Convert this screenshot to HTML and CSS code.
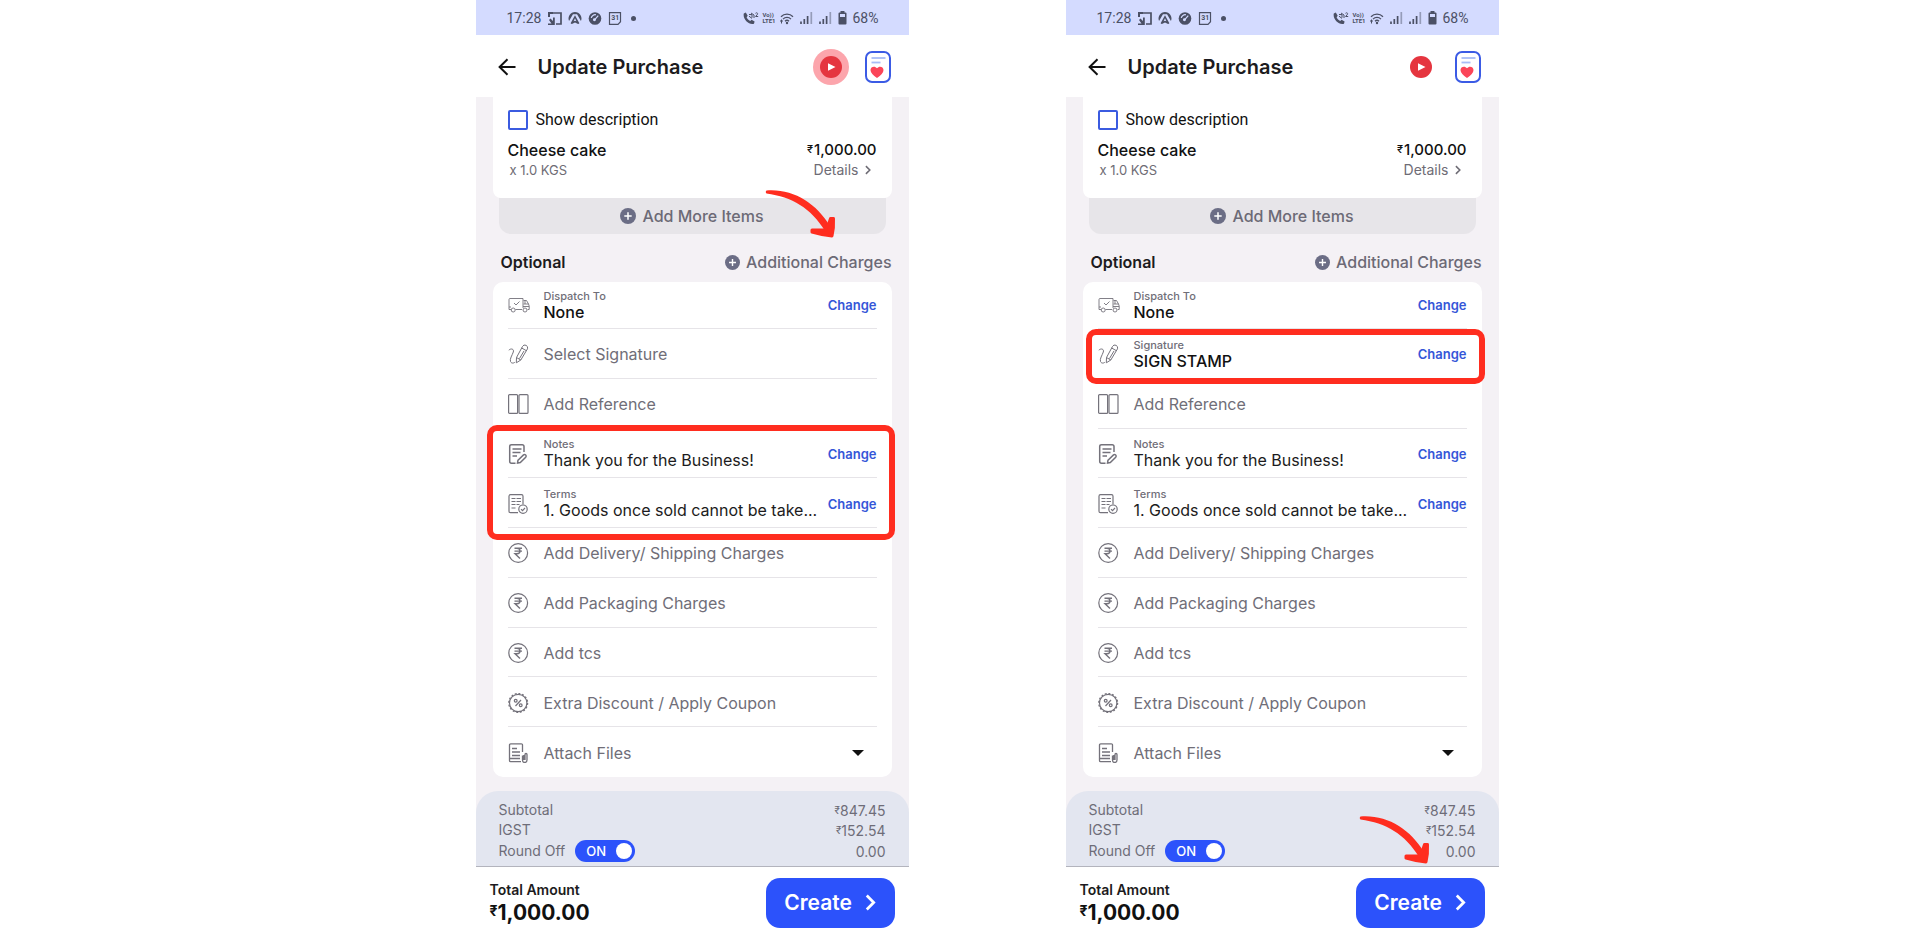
FILE: index.html
```html
<!DOCTYPE html>
<html lang="en">
<head>
<meta charset="utf-8">
<title>Update Purchase</title>
<link rel="stylesheet" href="styles.css">
</head>
<body>
<svg class="sprite" aria-hidden="true">
  <symbol id="i-cast" viewBox="0 0 14 13"><path d="M1 1h12v11H8" fill="none" stroke="currentColor" stroke-width="1.7"/><path d="M0 0h5v2H2v3H0V0zM0 13V11.500h3.500L1 8l1.500-1.500L5 9V5.500h1.800V13z" fill="currentColor"/></symbol>
  <symbol id="i-nav" viewBox="0 0 14 14"><path fill="currentColor" fill-rule="evenodd" d="M7 0a7 7 0 0 1 6.400 9.800L9.200 2.400H4.800L.6 9.800A7 7 0 0 1 7 0zM7 3.400l4.700 8.600a7 7 0 0 1-1.400 1L7 11.400 3.700 13a7 7 0 0 1-1.400-1zm0 3.400L5.500 10 7 9.400l1.500.6z"/></symbol>
  <symbol id="i-gauge" viewBox="0 0 14 14"><circle cx="7" cy="7" r="6.800" fill="currentColor"/><path d="M3 6.500A4.200 4.200 0 0 1 8 3M6 9l4.500-5" fill="none" stroke="#d4dbff" stroke-width="1.300"/><circle cx="6.400" cy="8.400" r="1.600" fill="#d4dbff"/></symbol>
  <symbol id="i-cal" viewBox="0 0 13 13"><path d="M1 .7h11v9L9.500 12.300H1z" fill="none" stroke="currentColor" stroke-width="1.200"/></symbol>
  <symbol id="i-call" viewBox="0 0 17 13"><path d="M.8 1.500 2.800.6 4.700 3.800 3.600 5.200c.8 1.800 2 3 3.600 3.700L8.600 7.800l3 1.700-.6 2.200C6 13.500-.5 7 .8 1.500z" fill="currentColor"/><path d="M6 2.500l3 .1v3M9 6.400 6 4.200M8 1l3 2v3" fill="none" stroke="currentColor"/><path d="M12.500 1.300c1-1 2.600-.3 2 .9L12.600 4.500h2.600" fill="none" stroke="currentColor"/></symbol>
  <symbol id="i-wifi" viewBox="0 0 14 12"><path d="M1 4.200a8.500 8.500 0 0 1 12 0M3 6.600a5.700 5.700 0 0 1 8 0M5 8.700a2.900 2.900 0 0 1 4 0" fill="none" stroke="currentColor" stroke-width="1.300"/><circle cx="7" cy="10.500" r="1.200" fill="currentColor"/><path d="M0 8.500h3M1.500 7v4" stroke="currentColor"/></symbol>
  <symbol id="i-signal" viewBox="0 0 13 12"><path d="M1 9.500V12M4.300 7V12M7.600 4V12" stroke="currentColor" stroke-width="1.700"/><path d="M11.300 0V12" stroke="currentColor" stroke-width="1.700" opacity=".45"/></symbol>
  <symbol id="i-batt" viewBox="0 0 9 14"><path fill="currentColor" fill-rule="evenodd" d="M2.500 0h4v1.500h1q1 0 1 1V12.500q0 1-1 1h-6q-1 0-1-1V2.500q0-1 1-1h1zM2 3v3h5V3z"/></symbol>
  <symbol id="i-back" viewBox="0 0 18 18"><path d="M17.500 9H2M9.500 1.200 1.600 9l7.900 7.800" fill="none" stroke="currentColor" stroke-width="2"/></symbol>
  <symbol id="i-play" viewBox="0 0 36 36"><circle cx="18" cy="18" r="11" fill="#e5353f"/><path d="M15 14.200v7.600l7.500-3.800z" fill="#fff"/></symbol>
  <symbol id="i-doc" viewBox="0 0 26 32"><rect x="1" y="1" width="24" height="30" rx="6" fill="#fff" stroke="#3b5be5" stroke-width="2"/><path d="M6.500 7h14" stroke="#a9bdf7" stroke-width="1.800"/><path d="M6.500 11.500h9" stroke="#a9bdf7" stroke-width="1.800"/><path d="M12 27C8 24 5.500 22 5.500 19c0-3.500 4.500-4.500 6.500-1.700 2-2.800 6.500-1.800 6.500 1.700 0 3-2.500 5-6.500 8z" fill="#fb4558"/></symbol>
  <symbol id="i-plus" viewBox="0 0 16 16"><circle cx="8" cy="8" r="8" fill="#6b6d85"/><path d="M8 4.300v7.400M4.300 8h7.400" stroke="#fff" stroke-width="1.500"/></symbol>
  <symbol id="i-chev" viewBox="0 0 10 16"><path d="M1.500 1.500 8 8l-6.500 6.500" fill="none" stroke="currentColor" stroke-width="2.600"/></symbol>
  <symbol id="i-truck" viewBox="0 0 22 20"><g fill="none" stroke="currentColor" stroke-width=".9"><path d="M3 14.500H1v-2.500h2M1 12V4.500q0-1 1-1h13V13M7.500 14.500H14M15.500 5.500h3l2 3.500.7 2v3.500h-1.500M15.500 9h5M17 5.500V9M15 11.500h6"/><path d="M6 8l2 2 3.500-3.500"/><circle cx="5.200" cy="15" r="2"/><circle cx="17" cy="15" r="2"/></g></symbol>
  <symbol id="i-sign" viewBox="0 0 22 20"><g fill="none" stroke="currentColor" stroke-width="1"><path d="M.8 6.200C3 4 6.300 5 5.300 8S1.500 15 2.500 17.500s4 1.500 4.500 .5"/><path d="M8.500 13.500 14.500 2.500q1.200-2.300 3.500-1.200t1.500 3.500L12.800 16 8.300 18.800zM13.700 4l4.300 2.500M8.500 13.500l4.300 2.500M16 7l-4.500 7.500"/></g></symbol>
  <symbol id="i-book" viewBox="0 0 22 20"><g fill="none" stroke="currentColor" stroke-width="1.200"><rect x=".6" y=".6" width="9" height="18.800" rx="1"/><rect x="11" y=".6" width="9" height="18.800" rx="1"/></g></symbol>
  <symbol id="i-note" viewBox="0 0 22 20"><g fill="none" stroke="currentColor" stroke-width="1.500"><path d="M16 8V2.500Q16 .8 14.200.8H3.500Q1.700.8 1.700 2.500v15q0 1.700 1.800 1.700H7.500M4.500 5h9M4.500 8.500h8M4.500 12h4.500"/><path d="M10 16.200l5.500-5.300q1.200-.8 2.200.1t0 2.200L12.300 18.500 9.500 19z"/></g></symbol>
  <symbol id="i-terms" viewBox="0 0 22 20"><g fill="none" stroke="currentColor" stroke-width="1.200"><path d="M15 10.500V2.200Q15 .7 13.500.7H2.500Q1 .7 1 2.200v15q0 1.500 1.500 1.500h7.500"/><path d="M3.500 4.500h4M8.500 4.500h4.500M3.500 7.500h4M8.500 7.500h4.500M3.500 10.500h4M8.500 10.500h3M3.500 14h4"/><circle cx="15" cy="15.200" r="4.200"/><path d="M13 15.200l1.500 1.500 2.500-2.700"/></g></symbol>
  <symbol id="i-rupee" viewBox="0 0 22 20"><g fill="none" stroke="currentColor" stroke-width="1.200"><circle cx="10.200" cy="10" r="9.400"/><path stroke-width="1.400" d="M6.500 5.200h7.500M6.500 8.100h7.500M6.500 5.200h2.500c4 0 4 5.500 0 5.500H7l5 4.800"/></g></symbol>
  <symbol id="i-pct" viewBox="0 0 22 20"><g fill="none" stroke="currentColor" stroke-width="1.200"><circle cx="10.200" cy="10" r="8.700"/><circle cx="10.200" cy="10" r="9.400" stroke-width="1.300" stroke-dasharray="1.900 1.790"/><path d="M7.500 13 13 7"/><circle cx="7.700" cy="7.700" r="1.400"/><circle cx="12.700" cy="12.300" r="1.400"/></g></symbol>
  <symbol id="i-file" viewBox="0 0 22 20"><g fill="none" stroke="currentColor" stroke-width="1.300"><path d="M14.500 9V2Q14.500.8 13.300.8H2.700Q1.500.8 1.500 2v15.500q0 1.200 1.200 1.200H13M4 5.500h5M4 9h8M4 12.500h8M1.500 15.500H12"/><path d="M14.500 12.500V17q0 2.500 2.200 2.500T19 17v-5.500q0-1-1-1t-1 1V17M15.800 12v5"/></g></symbol>
  <symbol id="i-arrow" viewBox="0 0 72 50"><path d="M1.500 .5C28-1.500 51 13 65 36L60 41C46 18 27 7 1.500 3.500Q0 2 1.500 .5z" fill="#ff2d1f"/><path d="M47 40 60 40Q64 35 65.500 28.500L68.500 28.500Q69 38 67 46 57 45 47 42z" fill="#ff2d1f" stroke="#ff2d1f" stroke-width="3" stroke-linejoin="round"/></symbol>
</svg>

<main class="stage">
  <section class="phone" aria-label="Notes and terms">
    <div class="status">
      <span class="time">17:28</span>
      <svg class="s14"><use href="#i-cast"/></svg>
      <svg class="s14"><use href="#i-nav"/></svg>
      <svg class="s14"><use href="#i-gauge"/></svg>
      <span class="cal"><svg class="s14"><use href="#i-cal"/></svg><b>31</b></span>
      <span class="dot"></span>
      <span class="status-right">
        <svg class="s17"><use href="#i-call"/></svg>
        <span class="volte"><span>Vo))</span><span>LTE1</span></span>
        <svg class="s14"><use href="#i-wifi"/></svg>
        <svg class="s13"><use href="#i-signal"/></svg>
        <svg class="s13"><use href="#i-signal"/></svg>
        <svg class="s9"><use href="#i-batt"/></svg>
        <span class="pct">68%</span>
      </span>
    </div>
    <header class="bar">
      <button class="icon-btn" aria-label="Back"><svg class="back"><use href="#i-back"/></svg></button>
      <h1>Update Purchase</h1>
      <button class="icon-btn play glow" aria-label="Play video"><svg><use href="#i-play"/></svg></button>
      <button class="icon-btn doc" aria-label="Favourite document"><svg><use href="#i-doc"/></svg></button>
    </header>
    <div class="body">
      <div class="item-card">
        <label class="check"><input type="checkbox">Show description</label>
        <div class="line"><strong>Cheese cake</strong><strong class="price"><small>₹</small>1,000.00</strong></div>
        <div class="line sub"><span class="qty">x 1.0 KGS</span><button class="details">Details<svg><use href="#i-chev"/></svg></button></div>
      </div>
      <button class="add-more"><svg class="plus"><use href="#i-plus"/></svg>Add More Items</button>
      <div class="optional"><h2>Optional</h2><button class="charges"><svg class="plus"><use href="#i-plus"/></svg>Additional Charges</button></div>
      <ul class="list">
        <li class="row"><svg><use href="#i-truck"/></svg><div class="val"><small>Dispatch To</small><strong>None</strong></div><button class="change">Change</button></li>
        <li class="row"><svg><use href="#i-sign"/></svg><button class="label">Select Signature</button></li>
        <li class="row"><svg><use href="#i-book"/></svg><button class="label">Add Reference</button></li>
        <li class="row"><svg><use href="#i-note"/></svg><div class="val"><small>Notes</small><span>Thank you for the Business!</span></div><button class="change">Change</button><span class="mark mark-two"></span></li>
        <li class="row"><svg><use href="#i-terms"/></svg><div class="val"><small>Terms</small><span>1. Goods once sold cannot be take...</span></div><button class="change">Change</button></li>
        <li class="row"><svg><use href="#i-rupee"/></svg><button class="label">Add Delivery/ Shipping Charges</button></li>
        <li class="row"><svg><use href="#i-rupee"/></svg><button class="label">Add Packaging Charges</button></li>
        <li class="row"><svg><use href="#i-rupee"/></svg><button class="label">Add tcs</button></li>
        <li class="row"><svg><use href="#i-pct"/></svg><button class="label">Extra Discount / Apply Coupon</button></li>
        <li class="row"><svg><use href="#i-file"/></svg><button class="label">Attach Files<i class="caret"></i></button></li>
      </ul>
      <div class="summary">
        <div class="sum"><span>Subtotal</span><span class="amt"><small>₹</small>847.45</span></div>
        <div class="sum"><span>IGST</span><span class="amt"><small>₹</small>152.54</span></div>
        <div class="sum"><label class="toggle">Round Off<span class="switch"><input type="checkbox" role="switch" checked><b>ON</b></span></label><span class="amt">0.00</span></div>
      </div>
    </div>
    <footer class="total">
      <div><p>Total Amount</p><strong><small>₹</small>1,000.00</strong></div>
      <button class="create">Create<svg><use href="#i-chev"/></svg></button>
    </footer>
    <svg class="arrow arrow-top" aria-hidden="true"><use href="#i-arrow"/></svg>
  </section>

  <section class="phone" aria-label="Signature">
    <div class="status">
      <span class="time">17:28</span>
      <svg class="s14"><use href="#i-cast"/></svg>
      <svg class="s14"><use href="#i-nav"/></svg>
      <svg class="s14"><use href="#i-gauge"/></svg>
      <span class="cal"><svg class="s14"><use href="#i-cal"/></svg><b>31</b></span>
      <span class="dot"></span>
      <span class="status-right">
        <svg class="s17"><use href="#i-call"/></svg>
        <span class="volte"><span>Vo))</span><span>LTE1</span></span>
        <svg class="s14"><use href="#i-wifi"/></svg>
        <svg class="s13"><use href="#i-signal"/></svg>
        <svg class="s13"><use href="#i-signal"/></svg>
        <svg class="s9"><use href="#i-batt"/></svg>
        <span class="pct">68%</span>
      </span>
    </div>
    <header class="bar">
      <button class="icon-btn" aria-label="Back"><svg class="back"><use href="#i-back"/></svg></button>
      <h1>Update Purchase</h1>
      <button class="icon-btn play" aria-label="Play video"><svg><use href="#i-play"/></svg></button>
      <button class="icon-btn doc" aria-label="Favourite document"><svg><use href="#i-doc"/></svg></button>
    </header>
    <div class="body">
      <div class="item-card">
        <label class="check"><input type="checkbox">Show description</label>
        <div class="line"><strong>Cheese cake</strong><strong class="price"><small>₹</small>1,000.00</strong></div>
        <div class="line sub"><span class="qty">x 1.0 KGS</span><button class="details">Details<svg><use href="#i-chev"/></svg></button></div>
      </div>
      <button class="add-more"><svg class="plus"><use href="#i-plus"/></svg>Add More Items</button>
      <div class="optional"><h2>Optional</h2><button class="charges"><svg class="plus"><use href="#i-plus"/></svg>Additional Charges</button></div>
      <ul class="list">
        <li class="row"><svg><use href="#i-truck"/></svg><div class="val"><small>Dispatch To</small><strong>None</strong></div><button class="change">Change</button></li>
        <li class="row"><svg><use href="#i-sign"/></svg><div class="val"><small>Signature</small><strong>SIGN STAMP</strong></div><button class="change">Change</button><span class="mark mark-one"></span></li>
        <li class="row"><svg><use href="#i-book"/></svg><button class="label">Add Reference</button></li>
        <li class="row"><svg><use href="#i-note"/></svg><div class="val"><small>Notes</small><span>Thank you for the Business!</span></div><button class="change">Change</button></li>
        <li class="row"><svg><use href="#i-terms"/></svg><div class="val"><small>Terms</small><span>1. Goods once sold cannot be take...</span></div><button class="change">Change</button></li>
        <li class="row"><svg><use href="#i-rupee"/></svg><button class="label">Add Delivery/ Shipping Charges</button></li>
        <li class="row"><svg><use href="#i-rupee"/></svg><button class="label">Add Packaging Charges</button></li>
        <li class="row"><svg><use href="#i-rupee"/></svg><button class="label">Add tcs</button></li>
        <li class="row"><svg><use href="#i-pct"/></svg><button class="label">Extra Discount / Apply Coupon</button></li>
        <li class="row"><svg><use href="#i-file"/></svg><button class="label">Attach Files<i class="caret"></i></button></li>
      </ul>
      <div class="summary">
        <div class="sum"><span>Subtotal</span><span class="amt"><small>₹</small>847.45</span></div>
        <div class="sum"><span>IGST</span><span class="amt"><small>₹</small>152.54</span></div>
        <div class="sum"><label class="toggle">Round Off<span class="switch"><input type="checkbox" role="switch" checked><b>ON</b></span></label><span class="amt">0.00</span></div>
      </div>
    </div>
    <footer class="total">
      <div><p>Total Amount</p><strong><small>₹</small>1,000.00</strong></div>
      <button class="create">Create<svg><use href="#i-chev"/></svg></button>
    </footer>
    <svg class="arrow arrow-bottom" aria-hidden="true"><use href="#i-arrow"/></svg>
  </section>
</main>
</body>
</html>
```
FILE: styles.css
```css
* { box-sizing: border-box; }
body { margin: 0; background: #fff; font-family: Inter, "Liberation Sans", sans-serif; color: #1c1b20; }
button { font: inherit; color: inherit; background: none; border: 0; padding: 0; margin: 0; cursor: pointer; text-align: left; }
h1, h2, p, ul { margin: 0; padding: 0; }
svg { display: block; flex: none; }
.sprite { position: absolute; width: 0; height: 0; }

.stage { display: flex; justify-content: center; gap: 157px; min-height: 100vh; padding-left: 54px; }
.phone { position: relative; display: flex; flex-direction: column; flex: 0 1 433px; min-width: 0; background: #fff; }

.status { display: flex; align-items: center; gap: 6px; height: 35px; padding: 1px 30px 0 31px; background: #d4dbff; color: #4b5065; font: 400 14px Roboto, sans-serif; }
.time { margin-right: 1px; }
.s14 { width: 14px; height: 13px; }
.s17 { width: 17px; height: 13px; }
.s13 { width: 13px; height: 12px; }
.s9 { width: 9px; height: 14px; }
.cal { display: grid; place-items: center; }
.cal svg, .cal b { grid-area: 1 / 1; }
.cal b { font-size: 7px; }
.dot { width: 5px; height: 5px; margin-left: 3px; border-radius: 50%; background: currentColor; }
.status-right { display: flex; align-items: center; gap: 6px; margin-left: auto; }
.volte { display: grid; margin-left: -4px; margin-right: -2px; font-size: 6px; font-weight: 700; line-height: 6px; }

.bar { display: flex; align-items: center; height: 62px; padding: 1px 18px 0 22px; }
.back { width: 18px; height: 18px; color: #111; }
.bar h1 { margin-left: 22px; margin-right: auto; font-size: 20px; font-weight: 600; line-height: 28px; }
.play { border-radius: 50%; }
.play svg { width: 36px; height: 36px; }
.glow { background: #fca5ac; }
.doc { margin-left: 16px; }
.doc svg { width: 26px; height: 32px; }

.body { flex: 1; display: flex; flex-direction: column; background: #f4f1f5; }
.item-card { margin: 0 17px; padding: 11px 15px 18px; background: #fff; border-radius: 0 0 8px 8px; }
.check { display: flex; align-items: center; gap: 8px; font: 400 16px/24px Roboto, sans-serif; color: #111; }
.check input { appearance: none; width: 20px; height: 20px; margin: 0; border: 2px solid #3b5be0; border-radius: 2px; background: #fff; }
.line { display: flex; justify-content: space-between; align-items: center; margin-top: 8px; font-size: 16px; line-height: 20px; }
.line strong { font-weight: 500; color: #111; }
.line .price { font-size: 15px; }
.price small { font-size: 11px; margin-right: 1px; vertical-align: 2px; line-height: 1; }
.line.sub { margin-top: 0; padding: 0 6px 0 2px; font-size: 14px; color: #6e6c75; }
.qty { font-size: 13px; }
.details { display: flex; align-items: center; gap: 6px; }
.details svg { width: 6px; height: 10px; }
.plus { width: 16px; height: 16px; }
.add-more { display: flex; align-items: center; justify-content: center; gap: 6px; height: 36px; margin: 0 23px; border-radius: 0 0 12px 12px; background: #e7e5e9; color: #6c6a76; font-size: 16px; font-weight: 500; }
.optional { display: flex; align-items: center; justify-content: space-between; height: 48px; margin: 0 17px 0 25px; padding-top: 8px; }
.optional h2 { font-size: 16px; line-height: 24px; font-weight: 600; }
.charges { display: flex; align-items: center; gap: 6px; font-size: 16px; font-weight: 500; color: #6c6a76; }
.charges .plus { width: 15px; height: 15px; }

.list { flex: 1; display: grid; grid-template: 47px repeat(9, 1fr) / minmax(0, 1fr); margin: 0 17px 14px; padding: 0 15px; list-style: none; background: #fff; border-radius: 10px; }
.row { position: relative; display: flex; align-items: center; gap: 13px; min-height: 44px; padding-top: 2px; border-bottom: 1px solid #e6e4e8; }
.row:first-child { padding-top: 0; }
.row:last-child { border-bottom: 0; }
.row > svg { width: 22px; height: 20px; color: #74727b; }
.label { flex: 1; display: flex; align-items: center; justify-content: space-between; padding-left: 1px; font-size: 16px; line-height: 24px; color: #706e78; }
.val { flex: 1; display: grid; min-width: 0; padding-left: 1px; }
.val small { font-size: 11px; line-height: 14px; font-weight: 500; color: #706e78; }
.val strong, .val span { font-size: 16px; line-height: 19px; white-space: nowrap; }
.val strong { font-weight: 500; color: #111; }
.change { font-size: 13px; font-weight: 600; color: #3556d8; }
.caret { margin-right: 13px; border: 6px solid transparent; border-top-color: #111; border-bottom: 0; }
.mark { position: absolute; z-index: 1; border: 6px solid #ff2d1f; border-radius: 10px; pointer-events: none; }
.mark-two { top: -4px; left: -21px; right: -18px; height: 115px; }
.mark-one { top: 0; left: -12px; right: -18px; height: 55px; }

.summary { padding: 9px 23px 4px; background: #e3e6f0; border-bottom: 1px solid #b3b4bd; border-radius: 22px 22px 0 0; color: #6e6d78; font-size: 14px; }
.sum { display: flex; justify-content: space-between; align-items: center; min-height: 20px; line-height: 18px; }
.amt { padding-top: 2px; }
.amt small { font-size: 10px; vertical-align: 2px; line-height: 1; }
.toggle { display: flex; align-items: center; gap: 10px; }
.switch { display: grid; align-items: center; width: 60px; height: 22px; color: #fff; }
.switch input, .switch b { grid-area: 1 / 1; }
.switch input { appearance: none; display: flex; justify-content: flex-end; align-items: center; width: 60px; height: 22px; margin: 0; padding: 3px; border-radius: 11px; background: #2c52fb; }
.switch input::before { content: ""; width: 16px; height: 16px; border-radius: 50%; background: #fff; }
.switch b { padding-left: 11px; font-size: 13px; font-weight: 500; z-index: 1; }

.total { display: flex; justify-content: space-between; align-items: center; height: 63px; padding: 8px 14px 0; }
.total p { font-size: 14px; line-height: 20px; font-weight: 600; }
.total strong { display: block; font-size: 21px; line-height: 26px; font-weight: 700; color: #111; }
.total small { font-size: 14px; vertical-align: 4px; line-height: 1; }
.create { display: flex; align-items: center; justify-content: center; gap: 13px; width: 129px; height: 50px; border-radius: 14px; background: #2c52fb; color: #fff; font-size: 21px; font-weight: 600; }
.create svg { width: 11px; height: 17px; }

.arrow { position: absolute; z-index: 2; width: 72px; height: 50px; pointer-events: none; }
.arrow-top { top: 190px; left: 289px; }
.arrow-bottom { bottom: 64px; left: 293px; }
```
